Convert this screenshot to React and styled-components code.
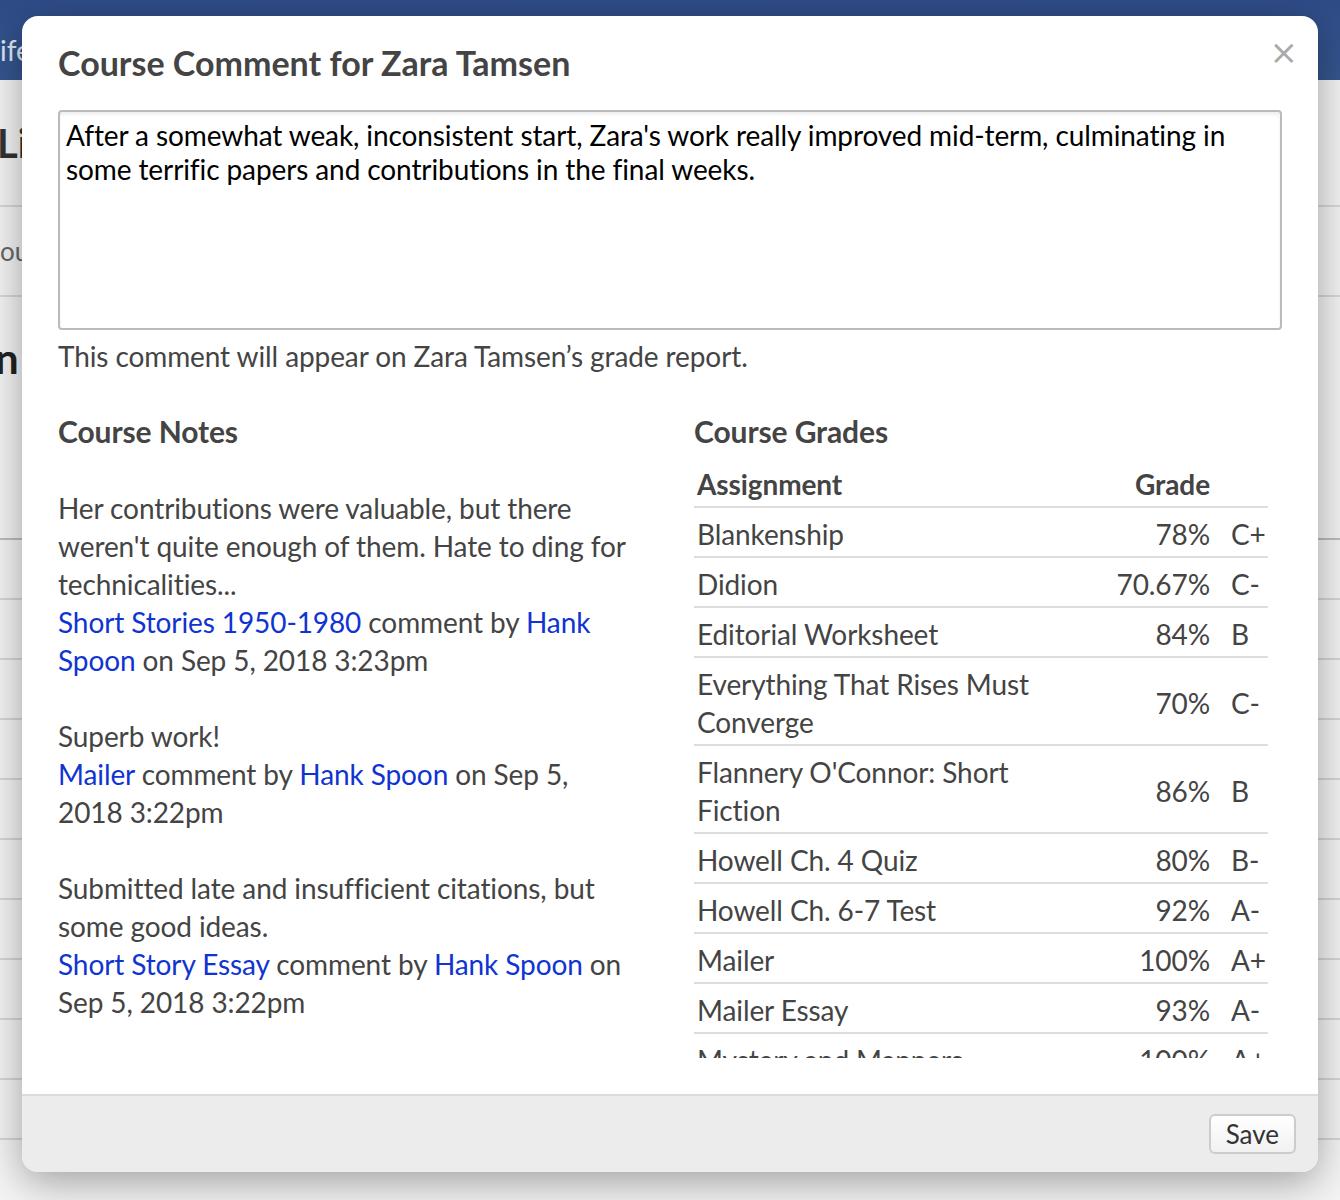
import React from "react";
import styled, { createGlobalStyle } from "styled-components";

const GlobalStyle = createGlobalStyle`
    body {
        margin: 0;
        font-family: Lato, "Open Sans", "Liberation Sans", sans-serif;
        background: #f3f3f3;
    }
`;

const NOTES = [
    {
        text: "Her contributions were valuable, but there weren't quite enough of them. Hate to ding for technicalities...",
        assignment: "Short Stories 1950-1980",
        author: "Hank Spoon",
        date: "Sep 5, 2018 3:23pm",
    },
    {
        text: "Superb work!",
        assignment: "Mailer",
        author: "Hank Spoon",
        date: "Sep 5, 2018 3:22pm",
    },
    {
        text: "Submitted late and insufficient citations, but some good ideas.",
        assignment: "Short Story Essay",
        author: "Hank Spoon",
        date: "Sep 5, 2018 3:22pm",
    },
];

const GRADES = [
    ["Blankenship", "78%", "C+"],
    ["Didion", "70.67%", "C-"],
    ["Editorial Worksheet", "84%", "B"],
    ["Everything That Rises Must Converge", "70%", "C-"],
    ["Flannery O'Connor: Short Fiction", "86%", "B"],
    ["Howell Ch. 4 Quiz", "80%", "B-"],
    ["Howell Ch. 6-7 Test", "92%", "A-"],
    ["Mailer", "100%", "A+"],
    ["Mailer Essay", "93%", "A-"],
    ["Mystery and Manners", "100%", "A+"],
    ["O'Connor Essay", "88%", "B+"],
];

export default function App() {
    return (
        <>
            <GlobalStyle />
            <Page>
                <TopBar>ife</TopBar>
                <PageHead>
                    <PageTitle>Li</PageTitle>
                </PageHead>
                <PageMeta>ou</PageMeta>
                <PageSection>
                    <SectionTitle>n</SectionTitle>
                </PageSection>
                <PageList>
                    {Array.from({ length: 11 }).map((_, i) => (
                        <PageRow key={i} first={i === 0} />
                    ))}
                </PageList>

                <Modal>
                    <ModalHeader>
                        <ModalTitle>Course Comment for Zara Tamsen</ModalTitle>
                        <CloseButton aria-label="Close">×</CloseButton>
                    </ModalHeader>

                    <ModalBody>
                        <CommentBox
                            defaultValue="After a somewhat weak, inconsistent start, Zara's work really improved mid-term, culminating in some terrific papers and contributions in the final weeks."
                        />
                        <Hint>This comment will appear on Zara Tamsen’s grade report.</Hint>

                        <Columns>
                            <Column>
                                <ColumnTitle>Course Notes</ColumnTitle>
                                <NotesList>
                                    {NOTES.map((note, i) => (
                                        <Note key={i}>
                                            {note.text}
                                            <br />
                                            <NoteLink href="#">{note.assignment}</NoteLink> comment by{" "}
                                            <NoteLink href="#">{note.author}</NoteLink> on {note.date}
                                        </Note>
                                    ))}
                                </NotesList>
                            </Column>

                            <Column>
                                <ColumnTitle>Course Grades</ColumnTitle>
                                <GradeTable>
                                    <thead>
                                        <tr>
                                            <HeadCell>Assignment</HeadCell>
                                            <HeadCell align="right">Grade</HeadCell>
                                            <HeadCell />
                                        </tr>
                                    </thead>
                                    <tbody>
                                        {GRADES.map(([name, pct, letter]) => (
                                            <tr key={name}>
                                                <NameCell>{name}</NameCell>
                                                <PctCell>{pct}</PctCell>
                                                <LetterCell>{letter}</LetterCell>
                                            </tr>
                                        ))}
                                    </tbody>
                                </GradeTable>
                            </Column>
                        </Columns>
                    </ModalBody>

                    <ModalFooter>
                        <SaveButton>Save</SaveButton>
                    </ModalFooter>
                </Modal>
            </Page>
        </>
    );
}

const Page = styled.div`
    position: relative;
    width: 1340px;
    height: 1200px;
    overflow: hidden;
    background: #f4f4f4;
`;

const TopBar = styled.div`
    height: 80px;
    background: linear-gradient(180deg, #2f4c88 0%, #36568f 100%);
    color: #dfe6f3;
    font-size: 28px;
    line-height: 100px;
`;

const PageHead = styled.div`
    height: 125px;
    border-bottom: 2px solid #d8d8d8;
    display: flex;
    align-items: center;
`;

const PageTitle = styled.h1`
    margin: 0 0 0 -3px;
    font-size: 40px;
    font-weight: 700;
    color: #333;
`;

const PageMeta = styled.div`
    height: 88px;
    border-bottom: 2px solid #d8d8d8;
    display: flex;
    align-items: center;
    font-size: 26px;
    color: #666;
`;

const PageSection = styled.div`
    box-sizing: border-box;
    height: 241px;
    padding-top: 36px;
`;

const SectionTitle = styled.h2`
    margin: 0 0 0 -5px;
    font-size: 42px;
    line-height: 50px;
    font-weight: 700;
    color: #222;
`;

const PageList = styled.div`
    display: flex;
    flex-direction: column;
`;

const PageRow = styled.div`
    height: 58px;
    border-top: 2px solid ${(p) => (p.first ? "#bdbdbd" : "#d6d6d6")};
`;

const Modal = styled.div`
    position: absolute;
    left: 22px;
    top: 16px;
    width: 1296px;
    height: 1156px;
    display: flex;
    flex-direction: column;
    background: #fff;
    border-radius: 16px;
    box-shadow: 0 10px 40px rgba(0, 0, 0, 0.35);
`;

const ModalHeader = styled.div`
    display: flex;
    justify-content: space-between;
    align-items: flex-start;
    padding: 24px 20px 0 36px;
`;

const ModalTitle = styled.h2`
    margin: 0;
    font-size: 34px;
    line-height: 46px;
    font-weight: 700;
    color: #444;
`;

const CloseButton = styled.button`
    border: 0;
    background: none;
    padding: 0;
    margin-top: -8px;
    font-family: "DejaVu Sans", sans-serif;
    font-size: 34px;
    line-height: 40px;
    color: #aaa;
    cursor: pointer;
`;

const ModalBody = styled.div`
    flex: 1;
    padding: 24px 36px 36px;
    display: flex;
    flex-direction: column;
    color: #444;
    font-size: 28px;
    line-height: 38px;
    letter-spacing: -0.1px;
`;

const CommentBox = styled.textarea`
    box-sizing: border-box;
    width: 100%;
    height: 220px;
    margin: 0;
    padding: 6px 6px;
    border: 2px solid #bbb;
    border-radius: 4px;
    box-shadow: inset 0 3px 3px rgba(0, 0, 0, 0.06);
    font-family: Lato, "Open Sans", sans-serif;
    font-size: 28px;
    line-height: 34px;
    letter-spacing: -0.1px;
    color: #000;
    resize: none;
    outline: none;
`;

const Hint = styled.p`
    margin: 7px 0 0;
`;

const Columns = styled.div`
    display: grid;
    grid-template-columns: 574px 574px;
    column-gap: 62px;
    margin-top: 36px;
    height: 647px;
    overflow: hidden;
`;

const Column = styled.section`
    display: flex;
    flex-direction: column;
`;

const ColumnTitle = styled.h3`
    margin: 0;
    font-size: 30px;
    line-height: 40px;
    font-weight: 700;
    color: #444;
`;

const NotesList = styled.div`
    margin-top: 38px;
    display: flex;
    flex-direction: column;
    gap: 38px;
`;

const Note = styled.p`
    margin: 0;
`;

const NoteLink = styled.a`
    color: #1034d2;
    text-decoration: none;
`;

const GradeTable = styled.table`
    margin-top: 8px;
    width: 574px;
    border-collapse: collapse;
    table-layout: fixed;
`;

const HeadCell = styled.th`
    padding: 6px 3px 3px;
    text-align: ${(p) => p.align || "left"};
    font-weight: 700;
    border-bottom: 2px solid #ddd;
    &:first-child { width: 364px; }
    &:last-child { width: 37px; padding: 0 0 0 1px; }
    &:nth-child(2) { padding-right: 20px; }
`;

const NameCell = styled.td`
    padding: 7px 3px 3px;
    border-bottom: 2px solid #ddd;
    vertical-align: middle;
`;

const PctCell = styled.td`
    padding: 7px 20px 3px 3px;
    text-align: right;
    border-bottom: 2px solid #ddd;
    vertical-align: middle;
`;

const LetterCell = styled.td`
    padding: 7px 0 3px 1px;
    border-bottom: 2px solid #ddd;
    vertical-align: middle;
`;

const ModalFooter = styled.div`
    display: flex;
    justify-content: flex-end;
    align-items: center;
    height: 76px;
    padding-right: 22px;
    background: #ececec;
    border-top: 2px solid #dcdcdc;
    border-radius: 0 0 16px 16px;
`;

const SaveButton = styled.button`
    height: 40px;
    padding: 0 15px;
    border: 2px solid #ccc;
    border-radius: 6px;
    background: linear-gradient(180deg, #ffffff 0%, #f1f1f1 100%);
    font-family: Lato, "Open Sans", sans-serif;
    font-size: 26px;
    color: #333;
    cursor: pointer;
`;
